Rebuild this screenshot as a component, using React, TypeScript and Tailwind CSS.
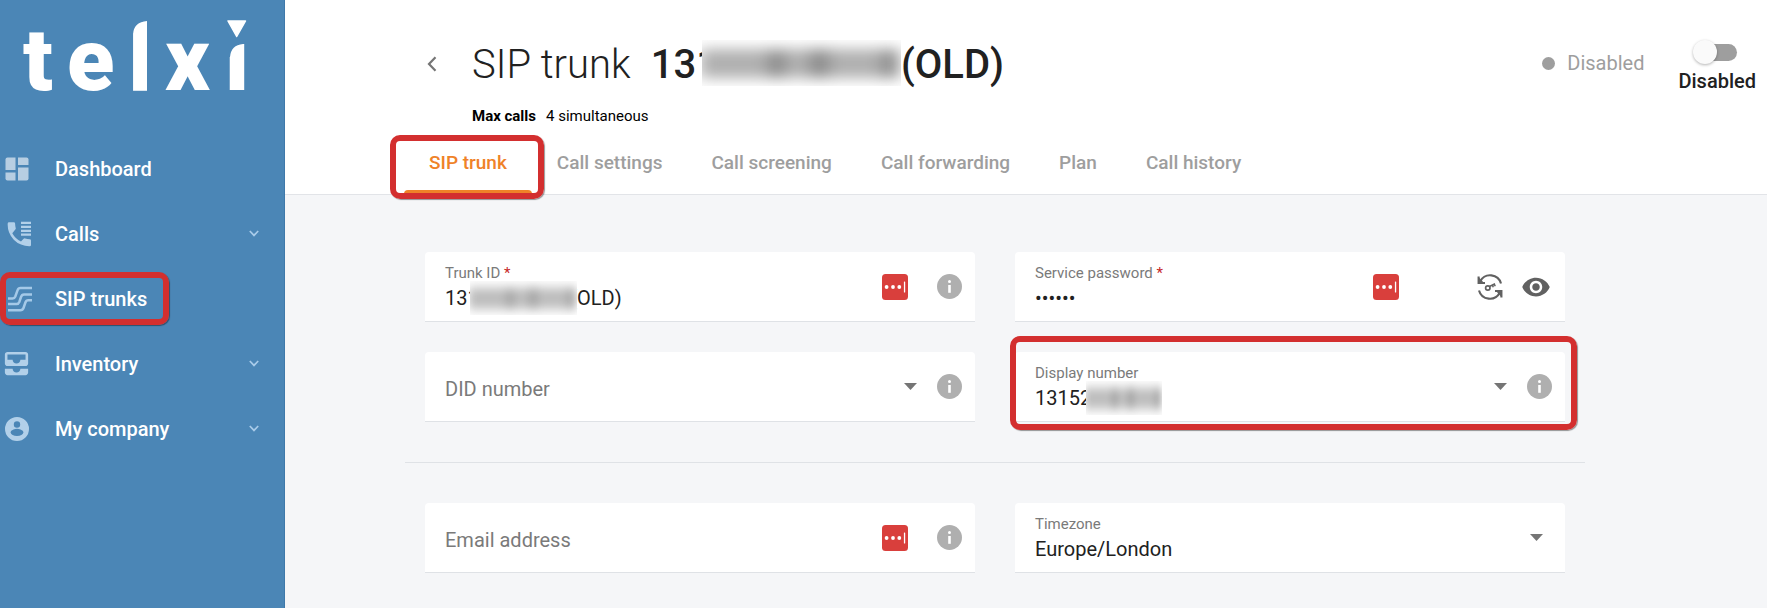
import React from "react";
import { MdAllInbox, MdVisibility } from "react-icons/md";

function Logo() {
  return (
    <svg width="250" height="104" viewBox="0 0 250 104" className="block overflow-visible text-white" role="img" aria-label="telxi">
      <defs>
        <clipPath id="stem-l">
          <path d="M120 120V34H133Q134 22 147 21V120Z" />
        </clipPath>
        <clipPath id="stem-i">
          <path d="M220 120V57H230Q231 45 243 44H256V120Z" />
        </clipPath>
      </defs>
      <g fill="currentColor" className="font-['Roboto',sans-serif] text-[87px] font-black">
        <text x="23" y="90">t</text>
        <text x="67" y="90">e</text>
        <text x="128" y="90" className="text-[92px]" clipPath="url(#stem-l)">l</text>
        <text x="165" y="90">x</text>
        <text x="225" y="90" clipPath="url(#stem-i)">i</text>
      </g>
      <path d="M228 21H245.500L236.700 36.500Z" fill="currentColor" stroke="currentColor" strokeWidth="1.500" strokeLinejoin="round" />
    </svg>
  );
}

function DashboardIcon() {
  return (
    <svg width="24" height="24" viewBox="0 0 24 24" fill="currentColor">
      <path d="M2.500 .5H10.500V13H.5V2.500Q.5 .5 2.500 .5Z" />
      <path d="M.5 15.500H10.500V23.500H2.500Q.5 23.500 .5 21.500Z" />
      <path d="M13 .5H21.500Q23.500 .5 23.500 2.500V8H13Z" />
      <path d="M13 10.500H23.500V21.500Q23.500 23.500 21.500 23.500H13Z" />
    </svg>
  );
}

function CallsIcon() {
  return (
    <svg width="24" height="26" viewBox="0 0 24 26" fill="currentColor">
      <path d="M5.300 12.200a19 19 0 0 0 8.700 8.200l2.600-2.700q.7-.6 1.600-.3 2 .7 4.500.8 1.300 0 1.300 1.300v4.500q0 1.200-1.300 1.200A21.500 21.500 0 0 1 .7 2.600Q.7 1.300 2 1.300H6.900Q8 1.300 8.100 2.500q.1 2.600.6 4.400.3 1-.4 1.700Z" />
      <path d="M14 .8H24V3H14ZM14 4.800H24V7H14ZM14 8.800H24V11H14ZM14 12.600H24V14.800H14Z" />
    </svg>
  );
}

function TrunksIcon() {
  return (
    <svg width="26" height="26" viewBox="0 0 26 26" fill="none" stroke="currentColor" strokeWidth="2.500">
      <path d="M1 12.500H5.500Q7.500 12.500 8.300 10.500L10.500 4.300Q11.300 2 13.500 2H25" />
      <path d="M1 18H9.500Q11.500 18 12.300 16L14 11Q14.800 8.500 17 8.500H25" />
      <path d="M1 24.200H13.500Q15.700 24.200 16.500 22L18.400 16.500Q19.200 14.200 21.200 14.200H25" />
    </svg>
  );
}

function CompanyIcon() {
  return (
    <svg width="24" height="24" viewBox="0 0 24 24" fill="currentColor">
      <path
        fillRule="evenodd"
        d="M12 0a12 12 0 1 0 0 24 12 12 0 0 0 0-24ZM12 4.300a3.200 3.200 0 1 1 0 6.400 3.200 3.200 0 0 1 0-6.400ZM8.500 12.500Q12 11 15.500 12.500 18.500 13.500 18.500 15.200 17.500 19 12 19 6.500 19 5.500 15.200 5.500 13.500 8.500 12.500Z"
      />
    </svg>
  );
}

function ChevronDown() {
  return (
    <svg width="10" height="7" viewBox="0 0 10 7" fill="none" stroke="currentColor" strokeWidth="1.700">
      <path d="M.8 1L5 5.400L9.200 1" />
    </svg>
  );
}

function Caret() {
  return (
    <svg width="13" height="7" viewBox="0 0 13 7" fill="#757575" className="pointer-events-none shrink-0">
      <path d="M0 0H13L6.500 7Z" />
    </svg>
  );
}

function InfoButton() {
  return (
    <button type="button" aria-label="More information" className="shrink-0">
      <svg width="25" height="25" viewBox="0 0 25 25" className="block">
        <circle cx="12.500" cy="12.500" r="12.500" fill="#afafaf" />
        <circle cx="12.500" cy="7.600" r="1.500" fill="#fff" />
        <path d="M11.200 11H13.800V18.800H11.200Z" fill="#fff" />
      </svg>
    </button>
  );
}

function VaultButton() {
  return (
    <button type="button" aria-label="Fill from password manager" className="shrink-0">
      <svg width="26" height="26" viewBox="0 0 26 26" className="block">
        <rect width="26" height="26" rx="3.500" fill="#d93f3c" />
        <g fill="#fff">
          <circle cx="4.600" cy="13" r="1.900" />
          <circle cx="11" cy="13" r="1.900" />
          <circle cx="17.300" cy="13" r="1.900" />
          <rect x="21.900" y="7.500" width="1.300" height="11" rx=".5" />
        </g>
      </svg>
    </button>
  );
}

function RegenerateButton() {
  return (
    <button type="button" aria-label="Generate new password" className="shrink-0 text-[#616161]">
      <svg width="26" height="26" viewBox="0 0 26 26" fill="none" stroke="currentColor" className="block">
        <path d="M3.300 7.300A11.200 11.200 0 0 1 24 9.500" strokeWidth="2.100" />
        <path d="M22.700 18.700A11.200 11.200 0 0 1 2 16.500" strokeWidth="2.100" />
        <path d="M1.600 2.600V9H8" strokeWidth="2.100" />
        <path d="M24.400 23.400V17H18" strokeWidth="2.100" />
        <path d="M1.600 3V9H7Z M24.400 23V17H19Z" fill="currentColor" stroke="none" />
        <circle cx="10.800" cy="14" r="2.200" strokeWidth="1.700" />
        <path d="M12.500 12.500L18 9.700M15.400 11.200L16.300 13.300M17.300 10L18.200 12.200" strokeWidth="1.500" />
      </svg>
    </button>
  );
}

/* Soft patch that hides the private digits of a phone number. */
function Redaction({ id, className, faint }: { id: string; className: string; faint?: boolean }) {
  return (
    <svg viewBox="0 0 200 46" preserveAspectRatio="none" aria-hidden="true" className={`pointer-events-none absolute ${className}`}>
      <defs>
        <filter id={id} x="-10%" y="-40%" width="120%" height="180%">
          <feGaussianBlur stdDeviation="8 7" />
        </filter>
      </defs>
      <rect width="200" height="46" fill="#fff" />
      <g filter={`url(#${id})`}>
        <rect x="-2" y="9" width="200" height="29" fill={faint ? "#bdbdbd" : "#b0b0b0"} />
        <g fill={faint ? "#a8a8a8" : "#8c8c8c"}>
          <rect x="66" y="10" width="18" height="28" />
          <rect x="108" y="9" width="20" height="29" />
          <rect x="180" y="10" width="18" height="28" />
        </g>
      </g>
    </svg>
  );
}

const frame =
  "pointer-events-none absolute border-[6px] border-[#d32f2f] rounded-[10px] shadow-[1px_1px_1px_rgba(0,0,0,0.4)]";

const nav = [
  { label: "Dashboard", icon: <DashboardIcon />, tone: "pl-[5px] text-[#b7cee2]" },
  { label: "Calls", icon: <CallsIcon />, tone: "pl-[7px] text-[#b2d0e9]", menu: true },
  { label: "SIP trunks", icon: <TrunksIcon />, tone: "pl-[7px] text-[#a4c9e8]", current: true },
  { label: "Inventory", icon: <MdAllInbox size={31} />, tone: "pl-px text-[#b2d0e9]", menu: true },
  { label: "My company", icon: <CompanyIcon />, tone: "pl-[5px] text-[#b2d0e9]", menu: true },
];

function Sidebar() {
  return (
    <aside className="w-[285px] shrink-0 border-r border-[#3f79aa] bg-[#4b86b6]">
      <Logo />
      <nav className="mt-8">
        <ul>
          {nav.map((item) => (
            <li key={item.label} className="relative">
              <a href="#" className="flex h-[65px] items-center pr-[25px] text-xl font-medium text-white">
                <span className={`flex w-[55px] items-center ${item.tone}`}>{item.icon}</span>
                <span className="flex-1">{item.label}</span>
                {item.menu && (
                  <span className="text-[#a9cbe9]">
                    <ChevronDown />
                  </span>
                )}
              </a>
              {item.current && <span className={`${frame} left-0 top-[6px] h-[53px] w-[169px]`} />}
            </li>
          ))}
        </ul>
      </nav>
    </aside>
  );
}

const tabs = ["SIP trunk", "Call settings", "Call screening", "Call forwarding", "Plan", "Call history"];

function Header() {
  return (
    <header className="border-b border-[#e2e4e8] bg-white">
      <div className="flex items-start pl-[140px] pr-[11px] pt-[40px]">
        <button type="button" aria-label="Back" className="flex h-[48px] w-[47px] items-center pl-[2px] text-[#757575]">
          <svg width="10" height="16" viewBox="0 0 10 16" fill="none" stroke="currentColor" strokeWidth="2.200">
            <path d="M8.500 1.200L2 8L8.500 14.800" />
          </svg>
        </button>
        <div className="flex-1">
          <h1 className="flex gap-5 text-[40px] leading-[50px] text-[#212121]">
            <span className="font-light">SIP trunk</span>
            <span className="relative flex font-medium">
              <span>131</span>
              <span className="w-[182px]" />
              <span>(OLD)</span>
              <Redaction id="soft-title" className="left-[51px] top-0 h-[46px] w-[199px]" />
            </span>
          </h1>
          <p className="mt-[14px] flex gap-[10px] text-[15px] leading-6 text-black">
            <span className="font-bold">Max calls</span>
            <span>4 simultaneous</span>
          </p>
        </div>
        <p className="mr-[34px] flex h-[46px] items-center gap-3 text-xl text-[#9e9e9e]">
          <span className="size-[13px] rounded-full bg-[#9e9e9e]" />
          Disabled
        </p>
        <label className="flex flex-col items-center gap-2 pt-[4px] text-xl leading-6 text-[#212121]">
          <input
            type="checkbox"
            role="switch"
            className="relative h-[17px] w-10 appearance-none rounded-full bg-[#9e9e9e] before:absolute before:-left-1 before:-top-1 before:size-6 before:rounded-full before:bg-[#fafafa] before:shadow-[0_1px_3px_rgba(0,0,0,0.3)] before:content-['']"
          />
          <span className="font-medium">Disabled</span>
        </label>
      </div>
      <div role="tablist" className="mt-1 flex pl-[119px] text-[19px]">
        {tabs.map((tab, i) => (
          <button
            key={tab}
            type="button"
            role="tab"
            aria-selected={i === 0}
            className={`relative h-[62px] font-medium ${i === 0 ? "px-[25px] text-[#ef8228]" : "pl-[25px] pr-6 text-[#9e9e9e]"}`}
          >
            {tab}
            {i === 0 && (
              <>
                <span className="absolute inset-x-0 bottom-0 h-1 rounded-t bg-[#ef8228]" />
                <span className={`${frame} -bottom-[5px] -left-[14px] -right-[12px] top-[3px]`} />
              </>
            )}
          </button>
        ))}
      </div>
    </header>
  );
}

function Card({ children, pad = "pr-[13px]" }: { children: React.ReactNode; pad?: string }) {
  return (
    <div className={`relative flex h-[70px] items-center rounded-t border-b border-[#dfe2e6] bg-white pl-5 ${pad}`}>{children}</div>
  );
}

function Label({ id, children, required }: { id: string; children: string; required?: boolean }) {
  return (
    <label htmlFor={id} className="text-[15px] leading-5 text-[#7a7a7a]">
      {children}
      {required && <span className="text-[#c62828]"> *</span>}
    </label>
  );
}

const control = "w-full appearance-none bg-transparent text-xl leading-6 text-[#212121] outline-none";
const stack = "relative flex min-w-0 flex-1 flex-col gap-[3px]";
const overlap = "grid min-w-0 flex-1 items-center pt-[5px]";
const resting = "pointer-events-none col-start-1 row-start-1 text-xl leading-6 text-[#7a7a7a]";

function TrunkForm() {
  return (
    <form className="max-w-[1300px] pb-9 pl-[120px] pt-[57px]">
      <div className="grid grid-cols-2 gap-x-10 gap-y-[30px] px-5">
        <Card>
          <div className={stack}>
            <Label id="trunk-id" required>Trunk ID</Label>
            <input id="trunk-id" className={control} defaultValue={"131\u2003\u2003\u2003\u2003\u00a0\u00a0(OLD)"} />
            <Redaction id="soft-trunk" faint className="left-[25px] top-[18px] h-[34px] w-[107px]" />
          </div>
          <div className="flex items-center gap-[29px]">
            <VaultButton />
            <InfoButton />
          </div>
        </Card>
        <Card pad="pr-[14px]">
          <div className={stack}>
            <Label id="password" required>Service password</Label>
            <input id="password" type="password" className={control} defaultValue="secret" />
          </div>
          <div className="flex items-center">
            <VaultButton />
            <span className="w-[78px]" />
            <RegenerateButton />
            <button type="button" aria-label="Show password" className="ml-[18px] text-[#616161]">
              <MdVisibility size={30} />
            </button>
          </div>
        </Card>
        <Card>
          <div className={overlap}>
            <label htmlFor="did" className={resting}>DID number</label>
            <select id="did" defaultValue="" className={`${control} col-start-1 row-start-1`}>
              <option value="" />
            </select>
          </div>
          <div className="flex items-center gap-5">
            <Caret />
            <InfoButton />
          </div>
        </Card>
        <Card>
          <div className={stack}>
            <Label id="display">Display number</Label>
            <select id="display" className={control}>
              <option>13152</option>
            </select>
            <Redaction id="soft-display" faint className="left-[51px] top-[18px] h-[34px] w-[76px]" />
          </div>
          <div className="flex items-center gap-5">
            <Caret />
            <InfoButton />
          </div>
          <span className={`${frame} -bottom-[9px] -left-[5px] -right-3 -top-4`} />
        </Card>
      </div>
      <hr className="my-10 border-[#dfe2e6]" />
      <div className="grid grid-cols-2 gap-x-10 px-5">
        <Card>
          <div className={overlap}>
            <label htmlFor="email" className={resting}>Email address</label>
            <input id="email" type="email" className={`${control} col-start-1 row-start-1`} />
          </div>
          <div className="flex items-center gap-[29px]">
            <VaultButton />
            <InfoButton />
          </div>
        </Card>
        <Card pad="pr-[22px]">
          <div className={stack}>
            <Label id="timezone">Timezone</Label>
            <select id="timezone" className={control}>
              <option>Europe/London</option>
            </select>
          </div>
          <Caret />
        </Card>
      </div>
    </form>
  );
}

export default function App() {
  return (
    <div className="flex min-h-screen font-['Roboto',sans-serif]">
      <Sidebar />
      <main className="min-w-0 flex-1 bg-[#f5f6f8]">
        <Header />
        <TrunkForm />
      </main>
    </div>
  );
}
